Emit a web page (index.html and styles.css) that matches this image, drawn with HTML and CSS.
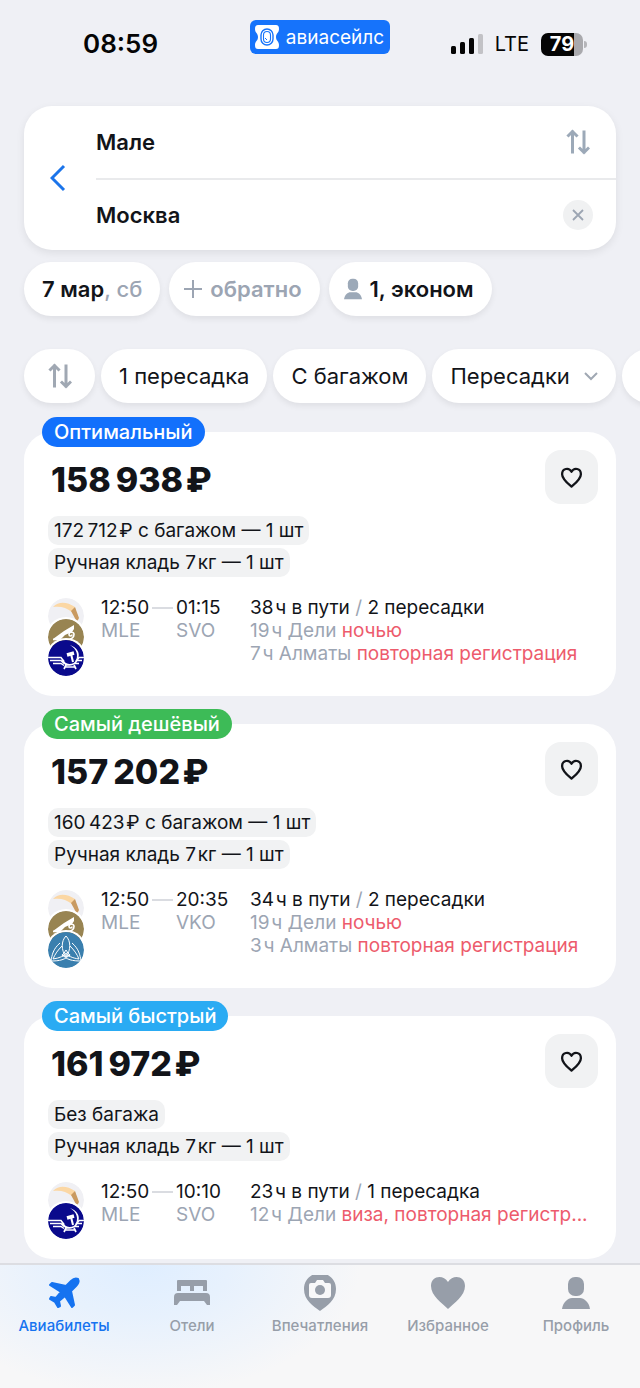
FILE: index.html
```html
<!DOCTYPE html>
<html lang="ru">
<head>
<meta charset="utf-8">
<meta name="viewport" content="width=device-width, initial-scale=1">
<title>Мале — Москва</title>
<link rel="stylesheet" href="styles.css">
</head>
<body>
<svg class="sprite" aria-hidden="true">
  <symbol id="i-swap" viewBox="0 0 24 26">
    <path d="M6.500 23V3M2.500 6.500l4-4 4 4M18 3v20M14 19.500l4 4 4-4" fill="none" stroke="currentColor" stroke-width="3" stroke-linecap="square"/>
  </symbol>
  <symbol id="i-user" viewBox="0 0 28 34">
    <rect x="6" y="1" width="16" height="19" rx="7"/>
    <path d="M0 33c1-7 6-11 10-11h8c4 0 9 4 10 11z"/>
  </symbol>
  <symbol id="i-heart-line" viewBox="0 0 24 24">
    <path d="M12 21.500C8 18 2.200 13.500 2.200 8.500c0-6 7-7.500 9.800-2.500 2.800-5 9.800-3.500 9.800 2.500 0 5-5.800 9.500-9.800 13z" fill="none" stroke="currentColor" stroke-width="2.400" stroke-linejoin="round"/>
  </symbol>
  <symbol id="l-india" viewBox="0 0 36 36">
    <circle cx="18" cy="18" r="18" fill="#f0f0f4"/>
    <path d="M5 9c6-6 14-5 22 0l-3 5C18 9 12 8 5 9z" fill="#fbd7a4"/>
    <path d="M27 9l4 11-2 4-6-11z" fill="#c99a61"/>
  </symbol>
  <symbol id="l-astana" viewBox="0 0 36 36">
    <circle cx="18" cy="18" r="18" fill="#988452"/>
    <path d="M5 20l11-8 10-6v4l-2 3-7 3-4 4z" fill="#fff"/>
    <path d="M5 20.500h13c5 0 8-2 8-5s-5-3-5 0c0 2 3 2 3 0" fill="none" stroke="#fff" stroke-width="1.600"/>
  </symbol>
  <symbol id="l-aeroflot" viewBox="0 0 36 36">
    <circle cx="18" cy="18" r="18" fill="#0a0a8c"/>
    <g fill="none" stroke="#fff">
      <path d="M0 17.500h13l3 4M36 17.500h-5l-3 4M2 20.500h11l3 3M34 20.500h-5M5 23.500h8l3 2M31 23.500h-4" stroke-width="1.500"/>
      <path d="M15 20c1 6 11 7 14 0M18 25l-2 4M26 25l2 4M17 27h10" stroke-width="1.700"/>
      <path d="M23 14l2 8" stroke-width="2"/>
      <path d="M19 15l7-2" stroke-width="3.500"/>
    </g>
    <path d="M22 5c9 3 12 12 5 17 4-6 2-13-5-17z" fill="#fff"/>
  </symbol>
  <symbol id="l-knot" viewBox="0 0 36 36">
    <circle cx="18" cy="18" r="18" fill="#3a7fae"/>
    <g fill="none" stroke="#fff" stroke-width="1">
      <path d="M18 4c5 5 5 14 0 21-5-7-5-16 0-21z"/>
      <path d="M12 11C5 17 4 23 3 29c8 0 15-1 19-7M24 11c7 6 8 12 9 18-8 0-15-1-19-7"/>
      <path d="M14 14c-4 4-7 8-9 13 7-1 11-3 15-7M22 14c4 4 7 8 9 13-7-1-11-3-15-7"/>
      <path d="M18 18l4 6h-8z"/>
    </g>
  </symbol>
</svg>

<header class="status">
  <time class="clock">08:59</time>
  <div class="brand">
    <svg width="26" height="26" viewBox="0 0 26 26" aria-hidden="true">
      <path d="M4 1h18c2 0 3 1 3 4 0 4-3 4-3 8s3 4 3 8c0 3-1 4-3 4H4c-2 0-3-1-3-4 0-4 3-4 3-8S1 9 1 5c0-3 1-4 3-4z" fill="#fff"/>
      <rect x="7" y="5" width="12" height="16" rx="6" fill="none" stroke="#1673fb" stroke-width="1.400"/>
      <rect x="9.500" y="7.500" width="7" height="11" rx="3.500" fill="none" stroke="#1673fb" stroke-width="1.100"/>
      <path d="M11 14l2 2" stroke="#1673fb"/>
    </svg>
    <span>авиасейлс</span>
  </div>
  <div class="signal">
    <svg width="32" height="20" viewBox="0 0 32 20" aria-hidden="true">
      <rect y="12" width="5" height="8" rx="1.500"/><rect x="9" y="8" width="5" height="12" rx="1.500"/><rect x="18" y="4" width="5" height="16" rx="1.500"/><rect x="27" width="5" height="20" rx="1.500" fill="#c2c2c6"/>
    </svg>
    <span>LTE</span>
    <span class="battery"><b>79</b></span>
  </div>
</header>

<main>
  <form class="search">
    <button class="back" type="button" aria-label="Назад">
      <svg width="16" height="28" viewBox="0 0 16 28"><path d="M14 2L2 14l12 12" fill="none" stroke="currentColor" stroke-width="3"/></svg>
    </button>
    <div class="fields">
      <div class="field">
        <input type="text" value="Мале" aria-label="Откуда">
        <button class="swap" type="button" aria-label="Поменять местами"><svg width="24" height="26"><use href="#i-swap"/></svg></button>
      </div>
      <div class="field">
        <input type="text" value="Москва" aria-label="Куда">
        <button class="clear" type="button" aria-label="Очистить">
          <svg width="12" height="12" viewBox="0 0 12 12"><path d="M1 1l10 10M11 1L1 11" stroke="currentColor" stroke-width="1.800"/></svg>
        </button>
      </div>
    </div>
  </form>

  <div class="params">
    <button class="pill" type="button"><span>7 мар<span class="muted">, сб</span></span></button>
    <button class="pill muted plus" type="button">
      <svg width="18" height="18" viewBox="0 0 18 18"><path d="M9 0v18M0 9h18" stroke="currentColor" stroke-width="2"/></svg>обратно
    </button>
    <button class="pill plus" type="button"><svg class="person" width="18" height="22"><use href="#i-user"/></svg>1, эконом</button>
  </div>

  <div class="filters">
    <button class="pill sort" type="button" aria-label="Сортировка"><svg width="24" height="26"><use href="#i-swap"/></svg></button>
    <button class="pill" type="button">1 пересадка</button>
    <button class="pill" type="button">С багажом</button>
    <button class="pill drop" type="button">Пересадки <svg width="14" height="9" viewBox="0 0 14 9"><path d="M1 1l6 6 6-6" fill="none" stroke="currentColor" stroke-width="2"/></svg></button>
    <button class="pill more" type="button" aria-label="Ещё фильтры"></button>
  </div>

  <section class="tickets">
    <article class="ticket">
      <span class="badge best">Оптимальный</span>
      <div class="top">
        <h2>158&#8201;938&#8202;₽</h2>
        <button class="like" type="button" aria-label="В избранное"><svg width="23" height="23"><use href="#i-heart-line"/></svg></button>
      </div>
      <ul class="tags"><li>172&#8201;712&#8202;₽ с багажом — 1 шт</li><li>Ручная кладь 7&#8202;кг — 1 шт</li></ul>
      <div class="flight">
        <div class="logos"><svg><use href="#l-india"/></svg><svg><use href="#l-astana"/></svg><svg><use href="#l-aeroflot"/></svg></div>
        <div class="point dep"><time>12:50</time><span class="muted">MLE</span></div>
        <div class="point"><time>01:15</time><span class="muted">SVO</span></div>
        <div class="info">
          <p>38&#8202;ч в пути <span class="muted">/</span> 2 пересадки</p>
          <p class="muted">19&#8202;ч Дели <em>ночью</em></p>
          <p class="muted">7&#8202;ч Алматы <em>повторная регистрация</em></p>
        </div>
      </div>
    </article>

    <article class="ticket">
      <span class="badge cheap">Самый дешёвый</span>
      <div class="top">
        <h2>157&#8201;202&#8202;₽</h2>
        <button class="like" type="button" aria-label="В избранное"><svg width="23" height="23"><use href="#i-heart-line"/></svg></button>
      </div>
      <ul class="tags"><li>160&#8201;423&#8202;₽ с багажом — 1 шт</li><li>Ручная кладь 7&#8202;кг — 1 шт</li></ul>
      <div class="flight">
        <div class="logos"><svg><use href="#l-india"/></svg><svg><use href="#l-astana"/></svg><svg><use href="#l-knot"/></svg></div>
        <div class="point dep"><time>12:50</time><span class="muted">MLE</span></div>
        <div class="point"><time>20:35</time><span class="muted">VKO</span></div>
        <div class="info">
          <p>34&#8202;ч в пути <span class="muted">/</span> 2 пересадки</p>
          <p class="muted">19&#8202;ч Дели <em>ночью</em></p>
          <p class="muted">3&#8202;ч Алматы <em>повторная регистрация</em></p>
        </div>
      </div>
    </article>

    <article class="ticket">
      <span class="badge fast">Самый быстрый</span>
      <div class="top">
        <h2>161&#8201;972&#8202;₽</h2>
        <button class="like" type="button" aria-label="В избранное"><svg width="23" height="23"><use href="#i-heart-line"/></svg></button>
      </div>
      <ul class="tags"><li>Без багажа</li><li>Ручная кладь 7&#8202;кг — 1 шт</li></ul>
      <div class="flight">
        <div class="logos"><svg><use href="#l-india"/></svg><svg><use href="#l-aeroflot"/></svg></div>
        <div class="point dep"><time>12:50</time><span class="muted">MLE</span></div>
        <div class="point"><time>10:10</time><span class="muted">SVO</span></div>
        <div class="info">
          <p>23&#8202;ч в пути <span class="muted">/</span> 1 пересадка</p>
          <p class="muted">12&#8202;ч Дели <em>виза, повторная регистр...</em></p>
        </div>
      </div>
    </article>
  </section>
</main>

<nav class="tabs">
  <a class="active" href="#tickets">
    <svg width="36" height="36" viewBox="0 0 36 36"><path d="M32 4c-2-1-5 0-7 2l-5 5L6 8 4 10l11 7-5 6-5-1-1 2 5 3 3 5 2-1-1-5 6-5 7 11 2-2-3-14 5-5c2-2 3-5 2-7z" fill="currentColor" stroke="currentColor" stroke-width="2" stroke-linejoin="round"/></svg>
    Авиабилеты
  </a>
  <a href="#hotels">
    <svg width="36" height="36" viewBox="0 0 36 36"><path d="M3 6q0-1 1-1h28q1 0 1 1v10h-4v-5h-9v5h-4v-5H7v5H3zM0 30v-8q0-4 4-4h28q4 0 4 4v8h-3l-3-4H6l-3 4H0z"/></svg>
    Отели
  </a>
  <a href="#places">
    <svg width="36" height="36" viewBox="0 0 36 36"><path d="M18-2c9 0 16 7 16 16 0 11-9 17-16 22C11 31 2 25 2 14 2 5 9-2 18-2z"/><path d="M9 8h4l2-3h6l2 3h4q2 0 2 2v10q0 3-3 3H10q-3 0-3-3V10q0-2 2-2z" fill="#f8f8f9"/><circle cx="18" cy="15" r="5"/></svg>
    Впечатления
  </a>
  <a href="#favorites">
    <svg width="36" height="36" viewBox="0 0 36 36"><path d="M18 34C12 28 1 21 1 11 1 1 13-1 18 7c5-8 17-6 17 4 0 10-11 17-17 23z"/></svg>
    Избранное
  </a>
  <a href="#profile">
    <svg width="28" height="36"><use href="#i-user"/></svg>
    Профиль
  </a>
</nav>
</body>
</html>
```
FILE: styles.css
```css
* { box-sizing: border-box; }
body {
  margin: 0;
  min-height: 100vh;
  display: flex;
  flex-direction: column;
  background: #eff0f5;
  color: #121419;
  font-family: Inter, "Noto Sans", sans-serif;
  font-size: 19px;
  line-height: 23px;
}
button, input { font: inherit; color: inherit; border: 0; padding: 0; background: none; }
h2, p, ul { margin: 0; padding: 0; }
svg { display: block; flex: none; fill: currentColor; }
.sprite { position: absolute; width: 0; height: 0; }
.muted { color: #9ca5b3; }

.status {
  display: grid;
  grid-template-columns: 1fr auto 1fr;
  align-items: center;
  padding: 20px 53px 45px 83px;
  color: #050505;
}
.clock { font-size: 26px; line-height: 34px; font-weight: 600; padding-top: 7px; }
.brand {
  align-self: start;
  display: flex;
  align-items: center;
  gap: 6px;
  height: 34px;
  padding: 0 6px 0 4px;
  margin-right: 30px;
  border-radius: 6px;
  background: #1673fb;
  color: #fff;
}
.signal {
  display: flex;
  align-items: center;
  justify-content: flex-end;
  gap: 12px;
  padding-top: 7px;
  font-size: 20px;
}
.battery {
  position: relative;
  width: 42px;
  height: 23px;
  border-radius: 7px;
  background: linear-gradient(90deg, #050505 79%, #a9a9ad 79%);
  color: #fff;
  text-align: center;
  margin-right: 4px;
}
.battery::after {
  content: "";
  position: absolute;
  left: 43px;
  top: 8px;
  width: 3px;
  height: 7px;
  border-radius: 0 3px 3px 0;
  background: #b5b5b9;
}

.search {
  display: flex;
  margin: 0 24px;
  border-radius: 28px;
  background: #fff;
  box-shadow: 0 3px 8px #00000014;
}
.back { width: 72px; color: #1b74ea; display: flex; align-items: center; padding-left: 26px; }
.fields { flex: 1; min-width: 0; }
.field { display: flex; align-items: center; height: 72px; padding-right: 23px; }
.field + .field { border-top: 2px solid #e9eaec; }
.field input { flex: 1; min-width: 0; font-size: 22px; font-weight: 600; outline: 0; }
.swap { width: 30px; display: grid; place-items: center; color: #9ca9b8; }
.clear { width: 30px; height: 30px; border-radius: 50%; display: grid; place-items: center; background: #f0f1f2; color: #9ca5b3; }

.params, .filters { display: flex; padding: 12px 24px 18px; }
.params { gap: 9px; font-weight: 600; }
.filters { gap: 6px; padding-top: 15px; padding-bottom: 29px; overflow-x: auto; scrollbar-width: none; }
.pill {
  flex: none;
  display: flex;
  align-items: center;
  height: 54px;
  padding: 0 18px;
  border-radius: 27px;
  background: #fff;
  box-shadow: 0 3px 6px #00000012;
  font-size: 22px;
}
.pill.muted { color: #9ca5b3; }
.pill .muted { font-weight: 500; }
.params .plus { gap: 8px; padding-left: 15px; }
.person { color: #9ca9b8; }
.sort { width: 71px; justify-content: center; color: #a0a8b3; }
.drop { gap: 14px; }
.drop svg { color: #a0a8b3; }
.more { width: 120px; }

.tickets { display: flex; flex-direction: column; gap: 28px; padding: 0 24px 4px; }
.ticket { position: relative; padding: 18px 18px 20px 24px; border-radius: 28px; background: #fff; }
.badge {
  position: absolute;
  left: 18px;
  top: -15px;
  padding: 0 12px;
  border-radius: 15px;
  color: #fff;
  font-size: 20px;
  font-weight: 500;
  line-height: 30px;
}
.best { background: #1270fc; }
.cheap { background: #3dbb57; }
.fast { background: #2aabf3; }
.top { display: flex; justify-content: space-between; align-items: center; }
.top h2 { padding: 6px 0 0 3px; font-size: 34px; line-height: 40px; font-weight: 800; }
.like { width: 53px; height: 54px; border-radius: 16px; background: #f1f2f3; display: grid; place-items: center; }
.tags { list-style: none; margin: 12px 0 21px; display: flex; flex-direction: column; align-items: flex-start; gap: 3px; }
.tags li { padding: 0 6px; line-height: 29px; border-radius: 10px; background: #f1f2f3; }
.flight { display: grid; grid-template-columns: 53px 75px 74px 1fr; }
.logos svg { position: relative; width: 36px; height: 36px; border-radius: 50%; }
.logos svg + svg { margin-top: -15px; box-shadow: 0 0 0 2px #fff; }
.point { display: flex; flex-direction: column; margin-top: -2px; }
.dep time { display: flex; align-items: center; gap: 3px; }
.dep time::after { content: ""; flex: 1; height: 2px; margin-right: 3px; background: #dadce1; }
.info { margin-top: -2px; min-width: 0; }
.info p { white-space: nowrap; }
.info em { font-style: normal; color: #ed5b6c; }

.tabs {
  margin-top: auto;
  display: grid;
  grid-template-columns: repeat(5, 1fr);
  height: 125px;
  border-top: 2px solid #dcdde2;
  background: radial-gradient(ellipse 220px 130px at 22% 0, #dfeeff 0, #e7f1fd 40%, #f7f7f8 100%);
}
.tabs a {
  display: flex;
  flex-direction: column;
  align-items: center;
  gap: 6px;
  padding-top: 10px;
  color: #979ea9;
  font-size: 15px;
  line-height: 18px;
  font-weight: 500;
  text-decoration: none;
}
.tabs .active { color: #1673f0; }
```
